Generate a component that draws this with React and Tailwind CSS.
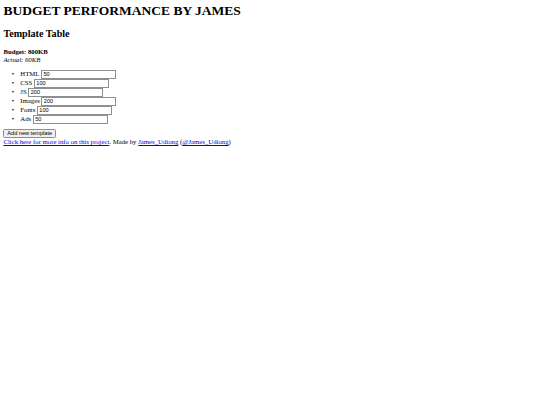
import { useState } from 'react';

const initialItems = [
  { label: 'HTML', value: '50' },
  { label: 'CSS', value: '100' },
  { label: 'JS', value: '200' },
  { label: 'Images', value: '200' },
  { label: 'Fonts', value: '100' },
  { label: 'Ads', value: '50' },
];

function App() {
  const [items, setItems] = useState(initialItems);

  const update = (i, v) => {
    setItems(items.map((it, idx) => (idx === i ? { ...it, value: v } : it)));
  };

  return (
    <div className="min-h-screen bg-white text-black font-['Liberation_Serif',serif] text-[6.75px] leading-[8px] px-[3.4px] pt-[2.8px]">
      {/* Header */}
      <h1 className="text-[13.5px] leading-[normal] font-bold mb-[9px]">BUDGET PERFORMANCE BY JAMES</h1>
      <h2 className="text-[10.125px] leading-[normal] font-bold mb-[9.2px]">Template Table</h2>

      {/* Budget */}
      <p>
        <b>Budget: 800KB</b>
        <br />
        <i>Actual: 60KB</i>
      </p>

      {/* List of inputs */}
      <ul className="pl-[16.9px] mt-[6px] mb-[5px]">
        {items.map((it, i) => (
          <li key={it.label} className="relative flex items-center h-[9px]">
            <span className="absolute -left-[8.5px]">•</span>
            <span className="mr-[1.7px]">{it.label}</span>
            <input
              value={it.value}
              onChange={(e) => update(i, e.target.value)}
              className="w-[75px] h-[9px] border border-[#8f8f8f] px-[1.3px] text-[5.6px] leading-[normal] font-['Liberation_Sans',sans-serif] outline-none"
            />
          </li>
        ))}
      </ul>

      {/* Actions */}
      <div className="leading-[7.5px]">
        <button className="h-[9px] w-[52.6px] border border-[#8f8f8f] rounded-[1.5px] bg-[#efefef] text-[5.6px] leading-[normal] font-['Liberation_Sans',sans-serif]">
          Add new template
        </button>
        <br />
        <a href="#" className="text-[#0000ee] underline">Click here for more info on this project</a>. Made by{' '}
        <a href="#" className="text-[#0000ee] underline">James_Udiong</a> (
        <a href="#" className="text-[#0000ee] underline">@James_Udiong</a>)
      </div>
    </div>
  );
}

export default App;
